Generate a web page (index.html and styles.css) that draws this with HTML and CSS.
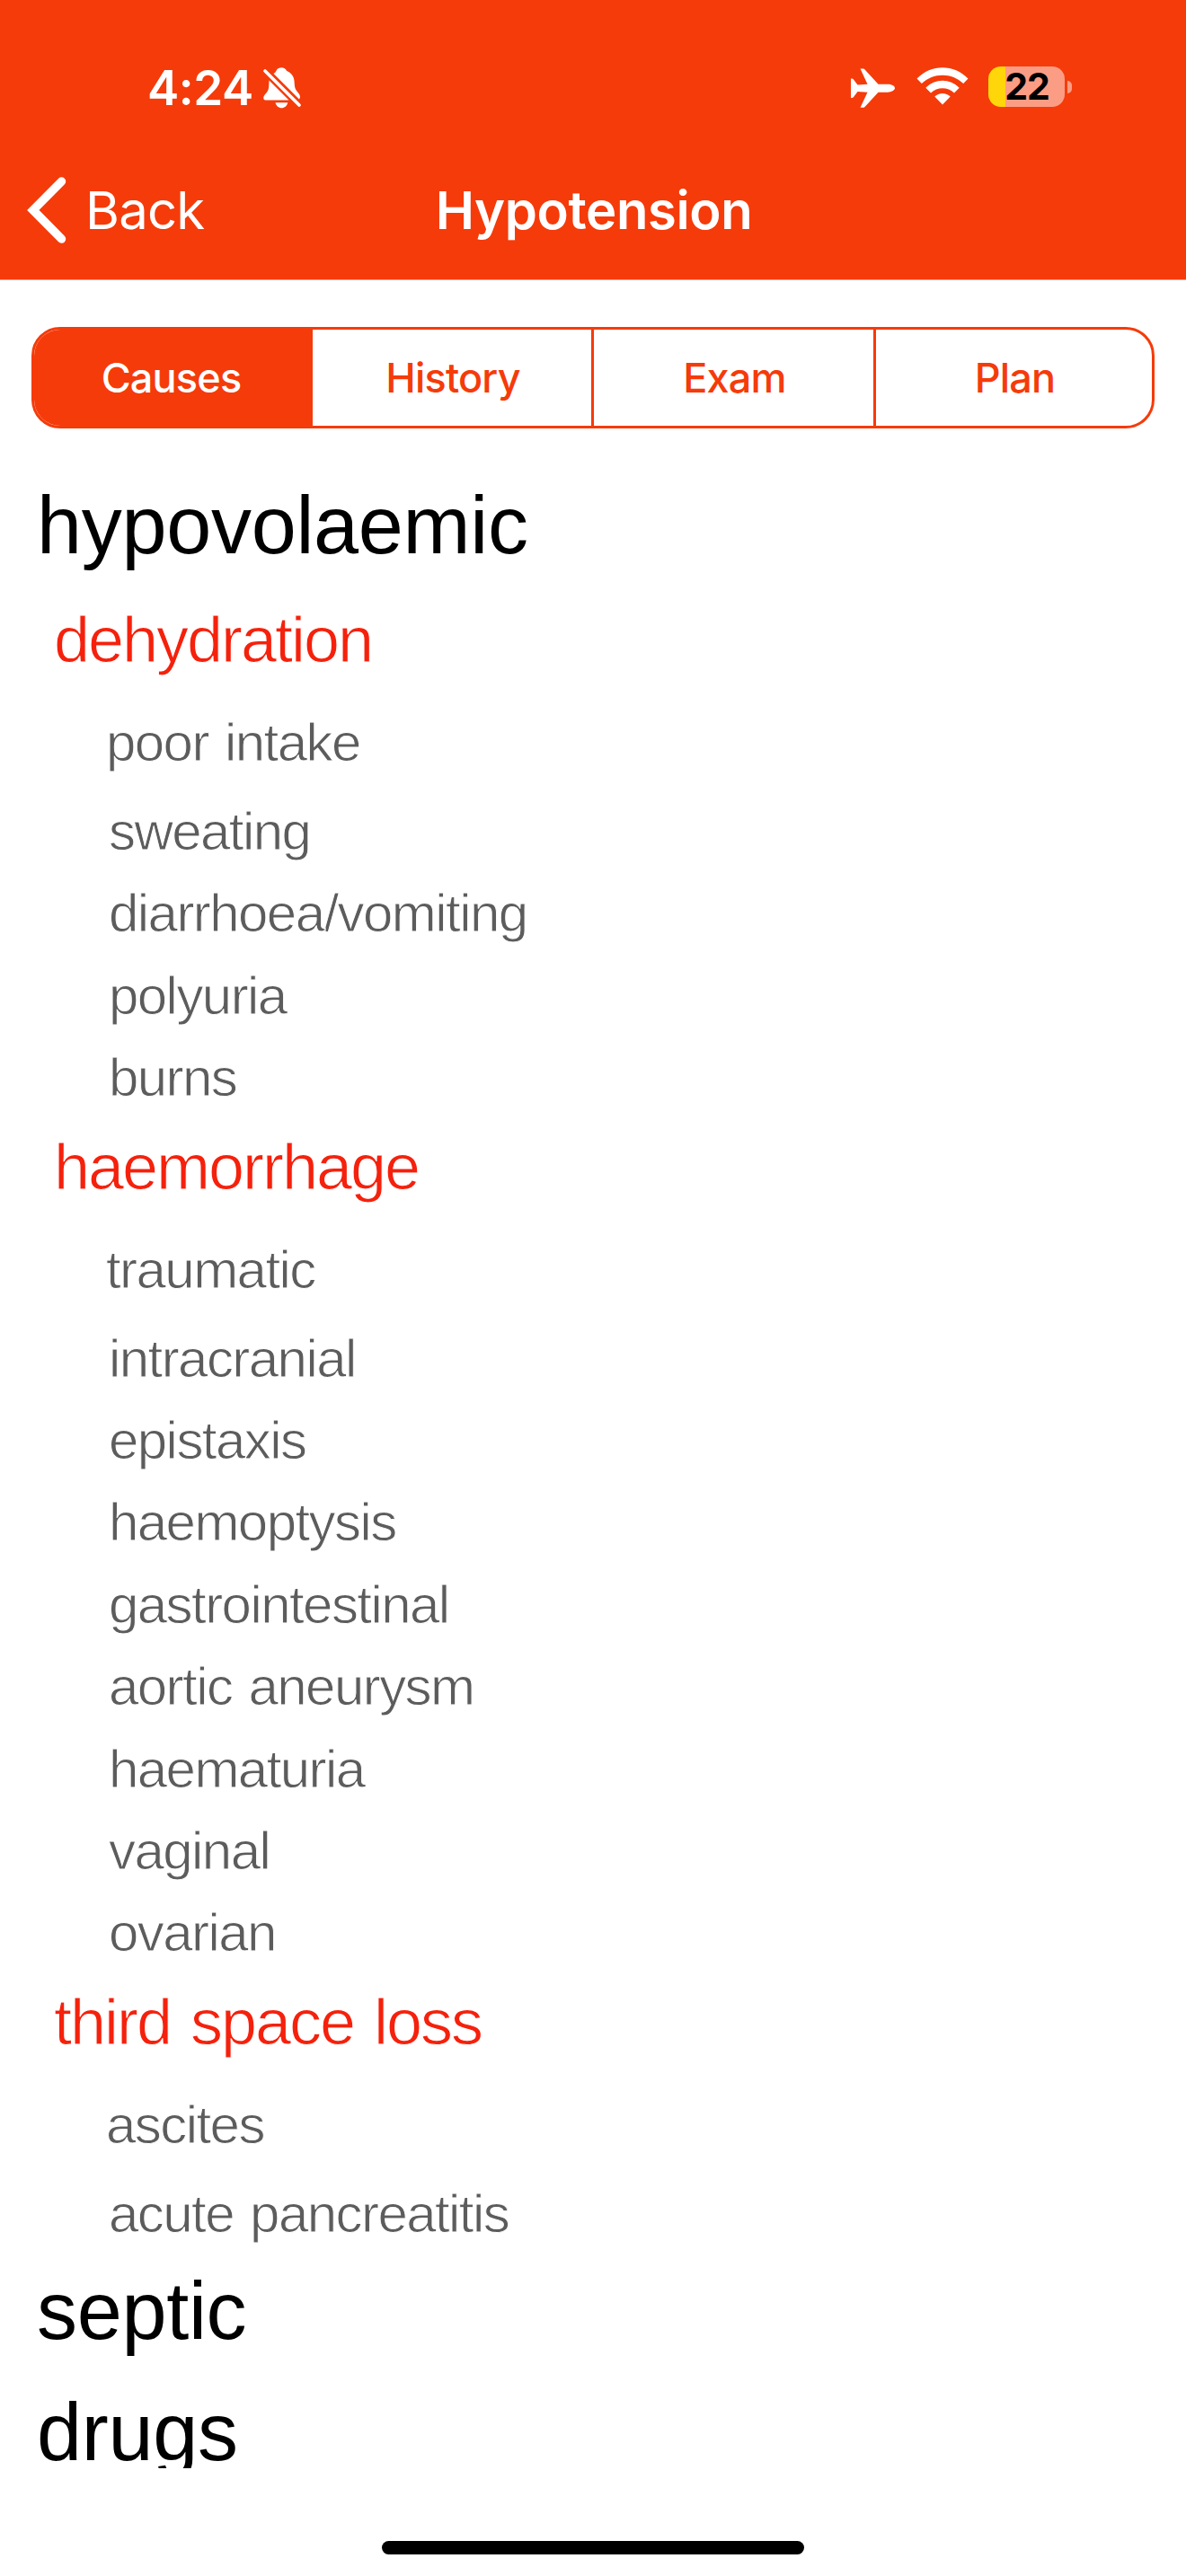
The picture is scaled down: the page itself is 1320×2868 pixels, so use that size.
FILE: index.html
```html
<!DOCTYPE html>
<html lang="en">
<head>
<meta charset="utf-8">
<title>Hypotension</title>
<link rel="stylesheet" href="styles.css">
</head>
<body>
<div class="screen">
  <header class="header">
    <div class="status">
      <div class="status-left">
        <span class="time">4:24</span>
        <svg class="bell" viewBox="0 0 42 46" width="42" height="46">
          <path fill="#fff" d="M11.500 7C13 6 14 5 14.700 3.200C16 1 18 0.300 20.300 0.300C23 0.300 25 1.500 26 3.800C31 6 34.300 10 34.600 16C34.900 22 35.300 24 38 27.200C40.300 30 41 31 41 33.500L40 35.600Z"/>
          <path fill="#fff" d="M6.500 14.500L28.500 36.500H2.500C-0.200 36.500-0.300 33 1.300 31C5 27 6.300 25 6.300 19Z"/>
          <path fill="#fff" d="M13.500 39.300H27.300C26.500 43 23.500 45.300 20.400 45.300C17.300 45.300 14.300 43 13.500 39.300Z"/>
          <path stroke="#fff" stroke-width="3.600" stroke-linecap="round" d="M2 4L40 42"/>
        </svg>
      </div>
      <div class="status-right">
        <svg class="plane" viewBox="0 0 49 44" width="49" height="44">
          <path fill="#fff" d="M10.500 0.500H13.500C14.700 0.500 15.300 1 16 2L30.500 17.700H41C45 17.700 49 19.500 49 22C49 24.500 45 26.700 41 26.700H30.500L16 42.500C15.300 43.400 14.700 43.800 13.500 43.800H10.500L18.500 26.700L7.500 26L3 32C2.500 32.700 2 33 1.200 33H0V11.500H1.200C2 11.500 2.500 11.800 3 12.500L7.500 18.500L18.500 17.700Z"/>
        </svg>
        <svg class="wifi" viewBox="0 0 58 42" width="58" height="42">
          <path fill="#fff" d="M0.500 12.500C16 -4 42 -4 57.500 12.500L52.200 18C39.500 5.500 18.500 5.500 5.800 18ZM10.300 22.700C20.500 12 37.500 12 47.700 22.700L42 28.400C35 21.500 23 21.500 16 28.400ZM20.300 32.500C25 27.700 33 27.700 37.700 32.500L29 41.500Z"/>
        </svg>
        <div class="battery"><div class="cell"><span>22</span></div><i class="nub"></i></div>
      </div>
    </div>
    <nav class="nav">
      <div class="back">
        <svg viewBox="0 0 44 74" width="44" height="74"><path fill="none" stroke="#fff" stroke-width="9.500" stroke-linecap="round" stroke-linejoin="miter" d="M38.500 5L6.800 36.900L38.500 69"/></svg>
        <span>Back</span>
      </div>
      <h1 class="title">Hypotension</h1>
    </nav>
  </header>
  <main class="main">
    <div class="tabs">
      <div class="tab active">Causes</div>
      <div class="tab">History</div>
      <div class="tab">Exam</div>
      <div class="tab">Plan</div>
    </div>
    <div class="list">
      <h2>hypovolaemic</h2>
      <h3>dehydration</h3>
      <ul>
        <li>poor intake</li>
        <li>sweating</li>
        <li>diarrhoea/vomiting</li>
        <li>polyuria</li>
        <li>burns</li>
      </ul>
      <h3>haemorrhage</h3>
      <ul>
        <li>traumatic</li>
        <li>intracranial</li>
        <li>epistaxis</li>
        <li>haemoptysis</li>
        <li>gastrointestinal</li>
        <li>aortic aneurysm</li>
        <li>haematuria</li>
        <li>vaginal</li>
        <li>ovarian</li>
      </ul>
      <h3>third space loss</h3>
      <ul>
        <li>ascites</li>
        <li>acute pancreatitis</li>
      </ul>
      <h2>septic</h2>
      <h2>drugs</h2>
    </div>
  </main>
  <footer class="footer"><div class="home"></div></footer>
</div>
</body>
</html>
```
FILE: styles.css
```css
* { box-sizing: border-box; margin: 0; padding: 0; }
body { background: #fff; }
.screen {
  width: 1320px;
  height: 2868px;
  display: flex;
  flex-direction: column;
  overflow: hidden;
  font-family: Inter, "Liberation Sans", sans-serif;
}

/* status bar and navigation */
.header {
  height: 312px;
  background: #f53b0a;
  border-bottom: 1px solid #bdb3b0;
  color: #fff;
  flex: none;
}
.status {
  height: 178px;
  padding: 74px 127px 0 164px;
  display: flex;
  justify-content: space-between;
  align-items: flex-start;
}
.status-left, .status-right { display: flex; align-items: flex-start; }
.time { width: 129px; font-size: 53px; line-height: 48px; font-weight: 600; letter-spacing: -0.5px; }
.bell { margin-top: 1px; }
.plane { margin: 2px 24px 0 0; }
.wifi { margin: 1px 22px 0 0; }
.battery { display: flex; align-items: center; gap: 3px; }
.cell {
  width: 85px;
  height: 45px;
  padding-left: 1px;
  border-radius: 14px;
  background: linear-gradient(90deg, #ffd60a 19px, #fb9d84 19px);
  color: #000;
  font-size: 41px;
  line-height: 45px;
  font-weight: 700;
  letter-spacing: -1px;
  text-align: center;
}
.nub { width: 5px; height: 14px; background: #fb9d84; border-radius: 0 5px 5px 0; }
.nav {
  height: 112px;
  padding: 0 30px;
  display: grid;
  grid-template-columns: 1fr auto 1fr;
  align-items: center;
  line-height: 74px;
}
.back { display: flex; align-items: center; gap: 21px; font-size: 58px; letter-spacing: -0.8px; }
.title { font-size: 58px; font-weight: 600; letter-spacing: -0.4px; padding-left: 2px; }

/* segmented control */
.main { height: 2436px; overflow: hidden; flex: none; }
.tabs {
  margin: 52px 35px 0;
  height: 113px;
  border: 3px solid #f53b0a;
  border-radius: 32px;
  display: grid;
  grid-template-columns: 310px 310px 314px 1fr;
  overflow: hidden;
}
.tab {
  padding-left: 2px;
  color: #f53b0a;
  font-size: 45px;
  font-weight: 450;
  letter-spacing: -0.8px;
  line-height: 107px;
  text-align: center;
}
.tab + .tab + .tab { border-left: 3px solid #f53b0a; }
.tab.active { padding: 0 5px 0 0; background: #f53b0a; color: #fff; }

/* outline of causes */
.list { padding-top: 41px; font-family: "Liberation Sans", Arial, sans-serif; white-space: nowrap; }
h2, h3, li { font-weight: 400; }
h2 { padding-left: 41px; font-size: 90px; line-height: 135px; height: 135px; letter-spacing: -0.3px; color: #000; }
h3 {
  padding-left: 60px;
  height: 118px;
  line-height: 118px;
  font-size: 72px;
  letter-spacing: -0.028em;
  word-spacing: 4px;
  color: #f5210c;
  -webkit-text-stroke: 1px #fff;
}
ul { list-style: none; margin-bottom: -6px; }
ul + h2 { margin-top: 2px; }
li {
  height: 91.400px;
  line-height: 91.400px;
  padding-left: 121px;
  font-size: 60px;
  letter-spacing: -0.026em;
  word-spacing: 3px;
  color: #5c5c5c;
  -webkit-text-stroke: 0.900px #fff;
}
li:first-child { height: 109px; line-height: 112px; padding-left: 118px; }

.footer { flex: 1; display: flex; justify-content: center; align-items: flex-end; padding-bottom: 24px; }
.home { width: 470px; height: 15px; border-radius: 8px; background: #000; }
```
